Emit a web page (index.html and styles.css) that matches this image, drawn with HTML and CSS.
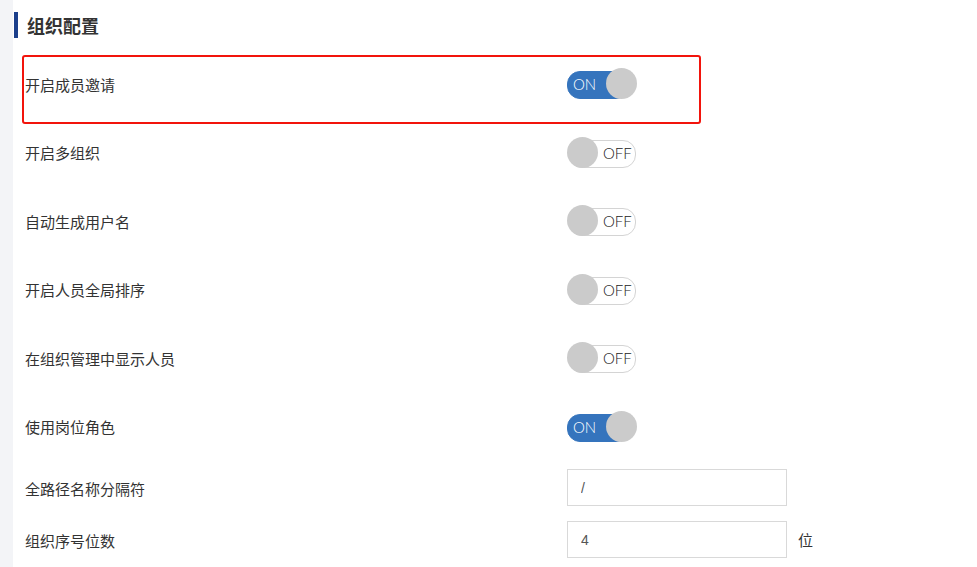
FILE: index.html
```html
<!DOCTYPE html>
<html lang="zh-CN">

<head>
    <meta charset="UTF-8">
    <meta name="viewport" content="width=device-width, initial-scale=1.0">
    <title>组织配置</title>
    <link rel="stylesheet" href="styles.css">
</head>

<body>
    <div id="page">
        <div class="side"></div>

        <div class="content">
            <h2 class="title">组织配置</h2>

            <div class="row active">
                <span class="label">开启成员邀请</span>
                <div class="switch on"><span class="txt">ON</span><i class="knob"></i></div>
            </div>
            <div class="row">
                <span class="label">开启多组织</span>
                <div class="switch"><i class="knob"></i><span class="txt">OFF</span></div>
            </div>
            <div class="row">
                <span class="label">自动生成用户名</span>
                <div class="switch"><i class="knob"></i><span class="txt">OFF</span></div>
            </div>
            <div class="row">
                <span class="label">开启人员全局排序</span>
                <div class="switch"><i class="knob"></i><span class="txt">OFF</span></div>
            </div>
            <div class="row">
                <span class="label">在组织管理中显示人员</span>
                <div class="switch"><i class="knob"></i><span class="txt">OFF</span></div>
            </div>
            <div class="row">
                <span class="label">使用岗位角色</span>
                <div class="switch on"><span class="txt">ON</span><i class="knob"></i></div>
            </div>

            <div class="field first">
                <span class="label">全路径名称分隔符</span>
                <input class="ipt" type="text" value="/">
            </div>
            <div class="field">
                <span class="label">组织序号位数</span>
                <input class="ipt" type="text" value="4">
                <span class="unit">位</span>
            </div>
        </div>
    </div>
</body>

</html>
```

FILE: styles.css
```css
* {
    padding: 0;
    margin: 0;
    box-sizing: border-box;
}

body {
    background: #fff;
    font-family: "Noto Sans CJK SC", "Liberation Sans", sans-serif;
    color: #333;
}

#page {
    display: flex;
    height: 567px;
}

.side {
    width: 13px;
    background: #f3f4f7;
}

.content {
    padding-left: 9px;
}

/* 标题 */
.title {
    display: flex;
    align-items: center;
    height: 26px;
    margin-top: 12px;
    margin-left: -8px;
    margin-bottom: 17px;
    padding-left: 9px;
    border-left: 4px solid #1b3f8b;
    font-size: 18px;
    font-weight: bold;
    line-height: 26px;
    color: #333;
}

.row {
    display: flex;
    align-items: center;
    width: 679px;
    padding: 11px 0 22.5px 1px;
    border: 2px solid transparent;
    border-radius: 3px;
}

.row.active {
    border-color: #f2140c;
}

.label {
    width: 542px;
    font-size: 15px;
    line-height: 20px;
    color: #333;
}

.row .label {
    position: relative;
    top: 1px;
}

/* 开关 */
.switch {
    position: relative;
    display: flex;
    align-items: center;
    width: 70px;
    height: 31px;
    font-family: Lato, "Open Sans", sans-serif;
    font-weight: 300;
    font-size: 15px;
}

.switch::before {
    content: "";
    position: absolute;
    left: 2px;
    right: 1px;
    top: 3px;
    height: 26px;
    border: 1px solid #d4d4d4;
    border-radius: 13px;
    background: #fff;
}

.switch.on {
    justify-content: space-between;
}

.switch.on::before {
    left: 0;
    right: 8px;
    border-color: #3574bd;
    background: #3574bd;
}

.switch .knob {
    position: relative;
    display: block;
    width: 31px;
    height: 31px;
    border-radius: 50%;
    background: #cbcbcb;
}

.switch .txt {
    position: relative;
    line-height: 31px;
    color: #222;
    margin-left: 5px;
    top: 1px;
}

.switch.on .txt {
    color: #fff;
    margin-left: 6px;
}

/* 输入 */
.field {
    display: flex;
    align-items: center;
    padding-left: 3px;
    height: 52px;
    padding-bottom: 15px;
}

.field.first {
    margin-top: 3px;
}

.field .label {
    position: relative;
    top: 1px;
}

.ipt {
    width: 220px;
    height: 37px;
    border: 1px solid #d9d9d9;
    padding: 0 13px;
    font-family: "Liberation Sans", sans-serif;
    font-size: 14px;
    color: #555;
    outline: none;
}

.unit {
    margin-left: 11px;
    font-size: 15px;
    color: #333;
}
```
